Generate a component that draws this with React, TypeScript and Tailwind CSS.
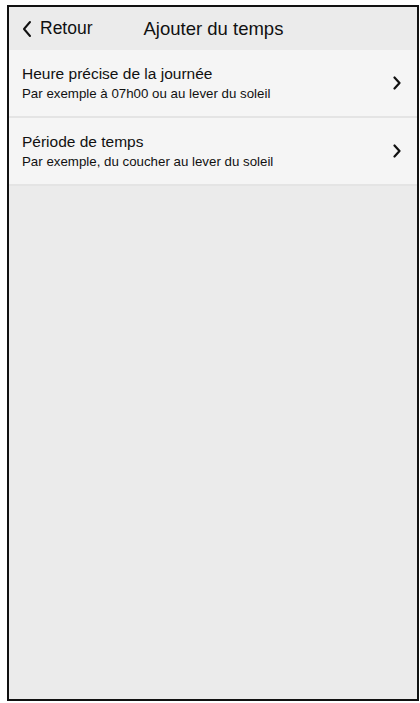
import React from "react";

function ChevronRight() {
  return (
    <svg width="10" height="14" viewBox="0 0 10 14" fill="none">
      <path d="M2.5 1.5 L7.5 7 L2.5 12.5" stroke="#111" strokeWidth="2.2" strokeLinecap="round" strokeLinejoin="round" />
    </svg>
  );
}

function Item({ title, subtitle }: { title: string; subtitle: string }) {
  return (
    <div className="flex items-center justify-between bg-[#f5f5f5] border-b-2 border-[#e4e4e4] h-[68px] pl-[13px] pr-[15px]">
      <div className="flex flex-col">
        <span className="text-[15.5px] leading-[20px] text-[#111]">{title}</span>
        <span className="text-[13.3px] leading-[19px] text-[#111]">{subtitle}</span>
      </div>
      <ChevronRight />
    </div>
  );
}

export default function App() {
  return (
    <div className="w-[420px] h-[703px] bg-white pt-[5px] pl-[7px] pr-[1px] pb-[2px]" style={{ fontFamily: '"Liberation Sans", Arial, sans-serif' }}>
      <div className="h-full border-2 border-[#111] bg-[#ebebeb] flex flex-col">
        <div className="h-[43px] flex items-center bg-[#ebebeb] pl-[12px]">
          <svg width="12" height="18" viewBox="0 0 12 18" fill="none">
            <path d="M9 2 L3 9 L9 16" stroke="#111" strokeWidth="2" strokeLinecap="round" strokeLinejoin="round" />
          </svg>
          <span className="ml-[7px] text-[17.5px] text-[#111]">Retour</span>
          <span className="ml-[51px] text-[18.5px] text-[#111]">Ajouter du temps</span>
        </div>
        <Item title="Heure précise de la journée" subtitle="Par exemple à 07h00 ou au lever du soleil" />
        <Item title="Période de temps" subtitle="Par exemple, du coucher au lever du soleil" />
        <div className="flex-1" />
      </div>
    </div>
  );
}
